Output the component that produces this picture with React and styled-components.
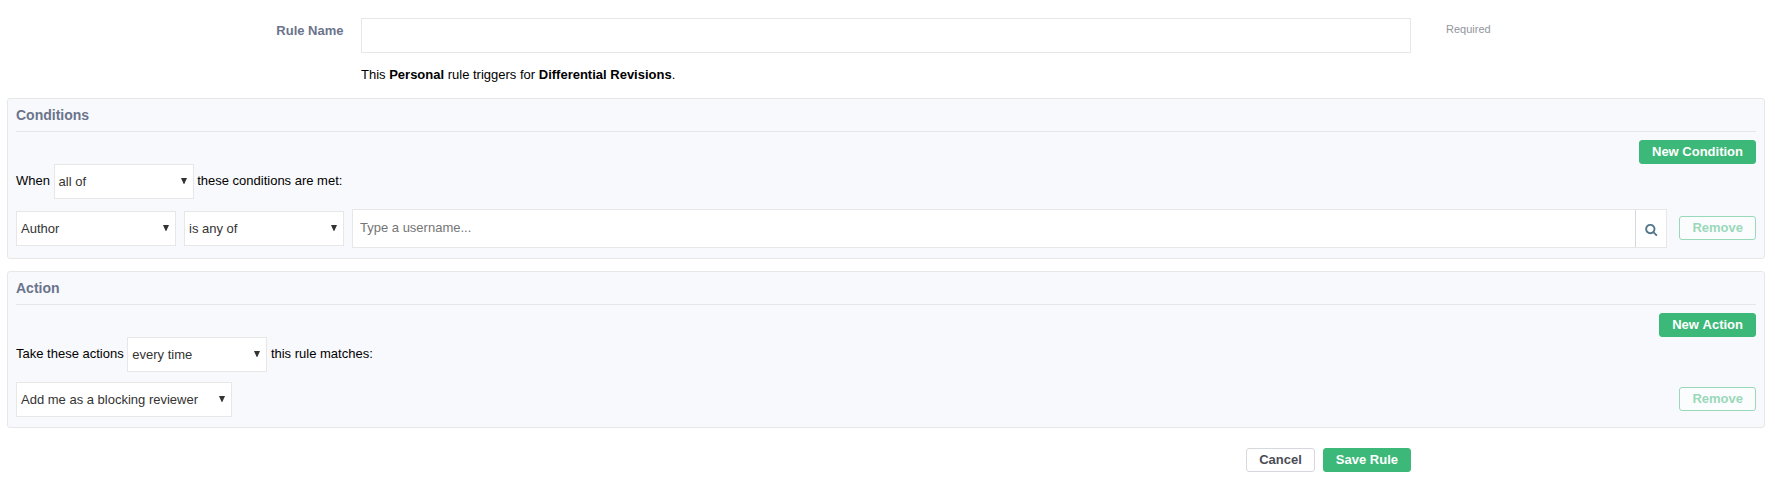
import React from "react";
import styled, { createGlobalStyle, css } from "styled-components";

const GlobalStyle = createGlobalStyle`
  *, *::before, *::after { box-sizing: border-box; }
  body {
    margin: 0;
    background: #fff;
    color: #000;
    font: 13px/16px "Liberation Sans", Arial, sans-serif;
  }
`;

const Form = styled.form`
  display: flex;
  flex-direction: column;
  padding: 18px 10px 0 7px;
`;

const NameRow = styled.div`
  display: grid;
  grid-template-columns: 336.5px 1050px auto;
  column-gap: 17.5px;
  justify-content: start;
`;

const Label = styled.label`
  padding-top: 5px;
  text-align: right;
  font-weight: bold;
  color: #6b748c;
`;

const NameInput = styled.input`
  width: 1050px;
  height: 35px;
  padding: 0 8px;
  border: 1px solid #e7e7e7;
  outline: none;
  font: inherit;
`;

const Required = styled.span`
  padding: 3px 0 0 17.5px;
  font-size: 11px;
  color: #92969d;
`;

const Caption = styled.p`
  margin: 14px 0 15px 354px;
`;

const Panel = styled.section`
  height: ${(p) => p.$height}px;
  margin-bottom: 12px;
  padding: 8px;
  border: 1px solid #e7e7e7;
  border-radius: 3px;
  background: #f8f9fc;
`;

const PanelTitle = styled.h2`
  margin: 0 0 8px;
  height: 25px;
  border-bottom: 1px solid #e5e6e8;
  font-size: 14px;
  line-height: 16px;
  font-weight: bold;
  color: #6b748c;
`;

const Toolbar = styled.div`
  display: flex;
  justify-content: flex-end;
`;

const Sentence = styled.div`
  display: flex;
  align-items: center;
  gap: 3.6px;
  height: 35px;
  white-space: pre;
`;

const Words = styled.span`
  height: 17px;
`;

const Row = styled.div`
  display: flex;
  align-items: center;
  margin-top: 10px;
  gap: 8px;
`;

const tones = {
  primary: css`
    border-color: #3cb878;
    background: #3cb878;
    color: #fff;
  `,
  outline: css`
    border-color: #3cb878;
    background: #fff;
    color: #3cb878;
    opacity: 0.5;
  `,
  plain: css`
    border-color: #d7d8dd;
    background: #fff;
    color: #4a4c55;
  `,
};

const Button = styled.button`
  height: 24px;
  padding: 0 12px;
  border: 1px solid;
  border-radius: 3px;
  font: bold 13px/20px "Liberation Sans", Arial, sans-serif;
  font-kerning: none;
  ${(p) => tones[p.$tone || "primary"]}
`;

const RemoveButton = styled(Button)`
  margin: 0 0 1px auto;
`;

const SelectBox = styled.div`
  display: flex;
  align-items: center;
  justify-content: space-between;
  flex: none;
  width: ${(p) => p.$width}px;
  height: 35px;
  padding: 0 6px 0 4px;
  border: 1px solid #e7e7e7;
  background: #fff;
  color: #333;

  span { padding-top: 1px; }
  svg { margin-bottom: 1px; }
`;

const Tokenizer = styled.div`
  display: flex;
  flex: 1;
  height: 39px;
  margin-right: 4px;
  border: 1px solid #e7e7e7;
  background: #fff;
`;

const TokenInput = styled.input`
  flex: 1;
  border: 0;
  padding: 0 7px 1px;
  outline: none;
  background: none;
  font: inherit;

  &::placeholder { color: #757575; opacity: 1; }
`;

const BrowseButton = styled.div`
  display: flex;
  align-items: center;
  justify-content: center;
  width: 31px;
  padding: 2px 0 0;
  border-left: 1px solid #d5d7de;
`;

const Footer = styled.div`
  display: flex;
  gap: 8px;
  justify-content: flex-end;
  width: 1404px;
  margin-top: 8px;
`;

function Select({ width, children }) {
  return (
    <SelectBox $width={width} role="combobox">
      <span>{children}</span>
      <svg width="6" height="6" viewBox="0 0 6 6">
        <path d="M0 0H6L3.3 6H2.7Z" fill="#333" />
      </svg>
    </SelectBox>
  );
}

function SearchIcon() {
  return (
    <svg width="12.5" height="13" viewBox="0 0 1664 1792" fill="#54768a">
      <path d="M1152 832q0-185-131.500-316.500t-316.500-131.500-316.500 131.500-131.500 316.500 131.500 316.500 316.500 131.500 316.500-131.500 131.500-316.500zm512 832q0 52-38 90t-90 38q-54 0-90-38l-343-342q-179 124-399 124-143 0-273.500-55.500t-225-150-150-225-55.500-273.500 55.500-273.500 150-225 225-150 273.500-55.500 273.500 55.500 225 150 150 225 55.500 273.500q0 220-124 399l343 343q37 37 37 90z" />
    </svg>
  );
}

export default function App() {
  return (
    <>
      <GlobalStyle />
      <Form onSubmit={(e) => e.preventDefault()}>
        <NameRow>
          <Label htmlFor="rule-name">Rule Name</Label>
          <NameInput id="rule-name" />
          <Required>Required</Required>
        </NameRow>
        <Caption>
          This <strong>Personal</strong> rule triggers for <strong>Differential Revisions</strong>.
        </Caption>

        <Panel $height={161}>
          <PanelTitle>Conditions</PanelTitle>
          <Toolbar>
            <Button type="button">New Condition</Button>
          </Toolbar>
          <Sentence>
            <Words>When</Words>
            <Select width={140}>all of</Select>
            <Words>these conditions are met:</Words>
          </Sentence>
          <Row>
            <Select width={160}>Author</Select>
            <Select width={160}>is any of</Select>
            <Tokenizer>
              <TokenInput placeholder="Type a username..." />
              <BrowseButton>
                <SearchIcon />
              </BrowseButton>
            </Tokenizer>
            <RemoveButton type="button" $tone="outline">Remove</RemoveButton>
          </Row>
        </Panel>

        <Panel $height={157}>
          <PanelTitle>Action</PanelTitle>
          <Toolbar>
            <Button type="button">New Action</Button>
          </Toolbar>
          <Sentence>
            <Words>Take these actions</Words>
            <Select width={140}>every time</Select>
            <Words>this rule matches:</Words>
          </Sentence>
          <Row>
            <Select width={216}>Add me as a blocking reviewer</Select>
            <RemoveButton type="button" $tone="outline">Remove</RemoveButton>
          </Row>
        </Panel>

        <Footer>
          <Button type="button" $tone="plain">Cancel</Button>
          <Button type="submit">Save Rule</Button>
        </Footer>
      </Form>
    </>
  );
}
